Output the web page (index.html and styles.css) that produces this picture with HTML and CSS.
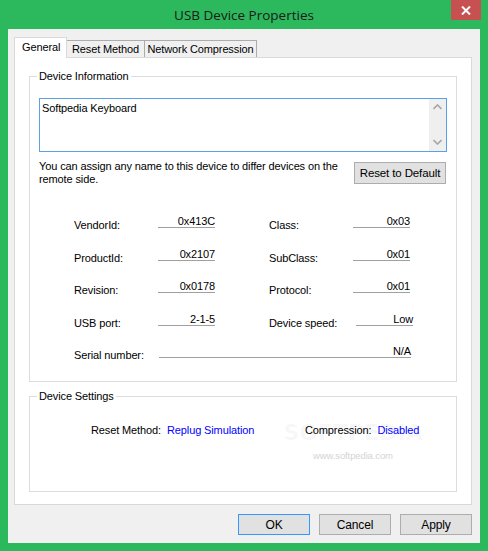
FILE: index.html
```html
<!DOCTYPE html>
<html>
<head>
<meta charset="utf-8">
<link rel="stylesheet" href="styles.css">
</head>
<body>
<div class="window">
  <div class="titlebar">
    <span class="title">USB Device Properties</span>
    <div class="close">
      <svg width="10" height="9" viewBox="0 0 10 9"><path d="M1 0.5 L9 8.5 M9 0.5 L1 8.5" stroke="#fff" stroke-width="2"/></svg>
    </div>
  </div>
  <div class="client">
    <div class="tabs">
      <div class="tab active">General</div>
      <div class="tab">Reset Method</div>
      <div class="tab">Network Compression</div>
    </div>
    <div class="panel">
      <fieldset class="group info">
        <legend>Device Information</legend>
        <div class="namebox">
          <span class="nametext">Softpedia Keyboard</span>
          <div class="vscroll">
            <svg width="9" height="6" viewBox="0 0 9 6"><path d="M0.5 5 L4.5 1 L8.5 5" fill="none" stroke="#a6a6a6" stroke-width="1.6"/></svg>
            <svg width="9" height="6" viewBox="0 0 9 6"><path d="M0.5 1 L4.5 5 L8.5 1" fill="none" stroke="#a6a6a6" stroke-width="1.6"/></svg>
          </div>
        </div>
        <div class="noterow">
          <p class="note">You can assign any name to this device to differ devices on the<br>remote side.</p>
          <div class="btn reset">Reset to Default</div>
        </div>
        <div class="fields">
          <span class="lbl">VendorId:</span><span class="val">0x413C</span><span></span>
          <span class="lbl">Class:</span><span class="val">0x03</span>
          <span class="lbl">ProductId:</span><span class="val">0x2107</span><span></span>
          <span class="lbl">SubClass:</span><span class="val">0x01</span>
          <span class="lbl">Revision:</span><span class="val">0x0178</span><span></span>
          <span class="lbl">Protocol:</span><span class="val">0x01</span>
          <span class="lbl">USB port:</span><span class="val">2-1-5</span><span></span>
          <span class="lbl">Device speed:</span><span class="val shift">Low</span>
          <span class="lbl">Serial number:</span><span class="val serial">N/A</span>
        </div>
      </fieldset>
      <fieldset class="group settings">
        <legend>Device Settings</legend>
        <div class="setrow">
          <div class="setitem first"><span>Reset Method:</span><span class="link">Replug Simulation</span></div>
          <div class="setitem"><span>Compression:</span><span class="link">Disabled</span></div>
        </div>
        <div class="watermark">
          <span class="wm-big">SOFTPEDIA</span>
          <span class="wm-small">www.softpedia.com</span>
        </div>
      </fieldset>
    </div>
    <div class="buttons">
      <div class="btn dlg default">OK</div>
      <div class="btn dlg">Cancel</div>
      <div class="btn dlg">Apply</div>
    </div>
  </div>
</div>
</body>
</html>
```

FILE: styles.css
```css
* { box-sizing: border-box; }
html, body { margin: 0; padding: 0; }
body {
  font-family: "Liberation Sans", Arial, sans-serif;
  font-size: 11px;
  letter-spacing: -0.12px;
  color: #000;
  background: #2cb85c;
}
.window {
  width: 488px;
  height: 551px;
  background: #2cb85c;
  display: flex;
  flex-direction: column;
  padding: 0 8px 8px 8px;
}
.titlebar {
  height: 29px;
  position: relative;
  display: flex;
  align-items: center;
  justify-content: center;
}
.title {
  font-family: "Open Sans", "Noto Sans", sans-serif;
  font-size: 13.5px;
  letter-spacing: 0;
  color: #1a1a1a;
  margin-top: 1px;
}
.close {
  position: absolute;
  top: 0;
  right: -1px;
  width: 30px;
  height: 20px;
  background: #c75050;
  display: flex;
  align-items: center;
  justify-content: center;
}
.client {
  flex: 1;
  background: #f0f0f0;
  padding: 8px 8px 0 6px;
  display: flex;
  flex-direction: column;
}
.tabs {
  display: flex;
  align-items: flex-end;
  height: 20px;
}
.tab {
  height: 17px;
  border: 1px solid #acacac;
  border-bottom: none;
  background: #f0f0f0;
  line-height: 16px;
  margin-left: -1px;
  white-space: nowrap;
  text-align: center;
}
.tab:nth-child(2) { width: 79px; }
.tab:nth-child(3) { width: 113px; }
.tab.active {
  margin-left: 0;
  width: 53px;
  height: 21px;
  margin-bottom: -1px;
  background: #fff;
  border-color: #d9d9d9;
  position: relative;
  z-index: 1;
  line-height: 17px;
  text-align: left;
  padding-left: 7px;
  padding-top: 1px;
}
.panel {
  height: 448px;
  background: #fff;
  border: 1px solid #d9d9d9;
  padding: 0 14px;
}
.group {
  margin: 0;
  padding: 0;
  border: 1px solid #dcdcdc;
  min-width: 0;
}
.group legend {
  margin-left: 7px;
  padding: 0 2px;
  line-height: 13px;
}
.info {
  margin-top: 12px;
  height: 312px;
}
.namebox {
  margin: 15px 0 0 9px;
  width: 408px;
  height: 54px;
  border: 1px solid #5aa0e6;
  display: flex;
  justify-content: space-between;
}
.nametext {
  padding: 3px 0 0 2px;
  line-height: 13px;
}
.vscroll {
  width: 17px;
  background: #efefef;
  display: flex;
  flex-direction: column;
  justify-content: space-between;
  align-items: center;
  padding: 5px 0 6px;
}
.noterow {
  display: flex;
  justify-content: space-between;
  align-items: flex-start;
  margin: 0 10px 0 9px;
}
.note {
  margin: 8px 0 0 0;
  line-height: 13px;
}
.btn {
  background: #e1e1e1;
  border: 1px solid #adadad;
  display: flex;
  align-items: center;
  justify-content: center;
  white-space: nowrap;
}
.reset {
  margin-top: 10px;
  width: 92px;
  height: 22px;
  font-size: 11.5px;
}
.fields {
  display: grid;
  grid-template-columns: 84px 57px 54px 84px 57px;
  grid-template-rows: 32px 33px 32px 33px 32px;
  margin: 10px 0 0 44px;
}
.lbl {
  align-self: end;
  margin-bottom: -4px;
  line-height: 13px;
}
.val {
  border-bottom: 1px solid #a0a0a0;
  display: flex;
  align-items: flex-end;
  justify-content: flex-end;
  line-height: 12px;
  padding-bottom: 0;
}
.val.shift { margin: 0 -3px 0 3px; }
.val.serial { grid-column: 2 / 6; margin-left: 1px; margin-right: -1px; }
.settings {
  margin-top: 8px;
  height: 102px;
  position: relative;
}
.setrow {
  display: flex;
  padding-left: 61px;
  margin-top: 21px;
  line-height: 13px;
}
.setitem { display: flex; gap: 6px; position: relative; z-index: 1; }
.setitem.first { width: 214px; }
.link { color: #0000ff; }
.watermark {
  position: absolute;
  left: 258px;
  top: 18px;
  width: 130px;
  display: flex;
  flex-direction: column;
  align-items: center;
  pointer-events: none;
}
.wm-big {
  font-family: "DejaVu Sans", sans-serif;
  font-size: 22px;
  font-weight: bold;
  letter-spacing: 0;
  color: rgba(0,0,0,0.045);
  line-height: 24px;
}
.wm-small {
  font-size: 9.5px;
  color: #d4d4d4;
  margin-top: 5px;
}
.buttons {
  display: flex;
  justify-content: flex-end;
  gap: 9px;
  margin-top: 9px;
}
.dlg {
  width: 72px;
  height: 21px;
  font-size: 12px;
}
.dlg.default { border-color: #3399ff; }
```
